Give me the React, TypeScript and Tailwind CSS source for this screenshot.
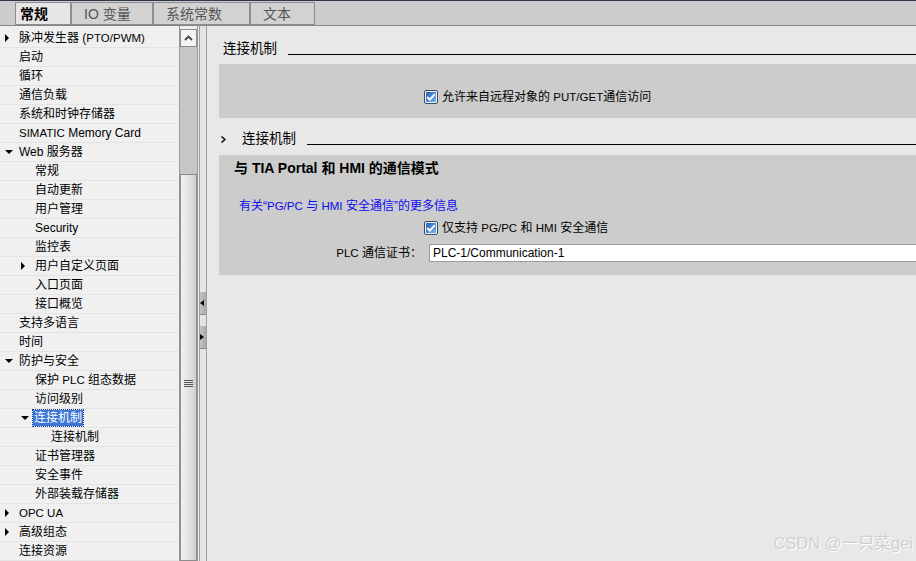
import React from 'react';

const FONT = "'Liberation Sans', 'Noto Sans CJK SC', sans-serif";

type Node = { label: string; level: number; arrow?: 'right' | 'down'; selected?: boolean };

const TREE: Node[] = [
    { label: '脉冲发生器 (PTO/PWM)', level: 0, arrow: 'right' },
    { label: '启动', level: 0 },
    { label: '循环', level: 0 },
    { label: '通信负载', level: 0 },
    { label: '系统和时钟存储器', level: 0 },
    { label: 'SIMATIC Memory Card', level: 0 },
    { label: 'Web 服务器', level: 0, arrow: 'down' },
    { label: '常规', level: 1 },
    { label: '自动更新', level: 1 },
    { label: '用户管理', level: 1 },
    { label: 'Security', level: 1 },
    { label: '监控表', level: 1 },
    { label: '用户自定义页面', level: 1, arrow: 'right' },
    { label: '入口页面', level: 1 },
    { label: '接口概览', level: 1 },
    { label: '支持多语言', level: 0 },
    { label: '时间', level: 0 },
    { label: '防护与安全', level: 0, arrow: 'down' },
    { label: '保护 PLC 组态数据', level: 1 },
    { label: '访问级别', level: 1 },
    { label: '连接机制', level: 1, arrow: 'down', selected: true },
    { label: '连接机制', level: 2 },
    { label: '证书管理器', level: 1 },
    { label: '安全事件', level: 1 },
    { label: '外部装载存储器', level: 1 },
    { label: 'OPC UA', level: 0, arrow: 'right' },
    { label: '高级组态', level: 0, arrow: 'right' },
    { label: '连接资源', level: 0 },
];

const INDENT = ['pl-[19px]', 'pl-[35px]', 'pl-[51px]'];
const ARROW_POS = ['left-[5px]', 'left-[21px]', 'left-[37px]'];

// Latin capitals in the reference use a narrower face than the CJK text
function Mixed({ text }: { text: string }) {
    const parts = text.split(/([A-Z][A-Z/()\-]*[A-Z)](?: [A-Z]+\b)?)/);
    return (
        <>
            {parts.map((p, i) =>
                i % 2 === 1 ? (
                    <span key={i} className="text-[11.5px]">{p}</span>
                ) : (
                    <React.Fragment key={i}>{p}</React.Fragment>
                ),
            )}
        </>
    );
}

function Arrow({ dir }: { dir: 'right' | 'down' }) {
    if (dir === 'right') {
        return (
            <svg width="4" height="8" viewBox="0 0 4 8">
                <path d="M0 0 L4 4 L0 8 Z" fill="#000" />
            </svg>
        );
    }
    return (
        <svg width="8" height="4" viewBox="0 0 8 4">
            <path d="M0 0 L8 0 L4 4 Z" fill="#000" />
        </svg>
    );
}

function TreeRow({ node }: { node: Node }) {
    return (
        <div className={`relative h-[19px] flex items-center border-b border-[#e4e4e4] text-[12px] text-black ${INDENT[node.level]}`}>
            {node.arrow && (
                <span className={`absolute top-0 bottom-0 flex items-center ${ARROW_POS[node.level]}`}>
                    <Arrow dir={node.arrow} />
                </span>
            )}
            {node.selected ? (
                <span className="bg-[#3a76d6] text-white px-[1px] -ml-[2px] leading-[16px] outline outline-1 outline-dotted outline-[#1b3f80]">
                    {node.label}
                </span>
            ) : (
                <span className="whitespace-nowrap">
                    <Mixed text={node.label} />
                </span>
            )}
        </div>
    );
}

function CheckBox() {
    return (
        <svg width="14" height="14" viewBox="0 0 14 14" className="shrink-0">
            <defs>
                <linearGradient id="cbFill" x1="0" y1="0" x2="1" y2="1">
                    <stop offset="0" stopColor="#1f5fb5" />
                    <stop offset="1" stopColor="#7db6ee" />
                </linearGradient>
            </defs>
            <rect x="0.5" y="0.5" width="13" height="13" rx="1.5" fill="#eef3f8" stroke="#3b4c66" />
            <rect x="2" y="2" width="10" height="10" rx="0.5" fill="url(#cbFill)" />
            <path d="M3.3 7 L5.8 9.6 L10.8 4.2" stroke="#fff" strokeWidth="1.9" fill="none" />
        </svg>
    );
}

function SectionHead({ title, chevron }: { title: string; chevron?: boolean }) {
    return (
        <div className="h-[20px] flex items-center">
            {chevron && (
                <svg width="5" height="7" viewBox="0 0 5 7" className="ml-[2px] mr-[16px]">
                    <path d="M0.5 0.5 L4 3.5 L0.5 6.5" stroke="#000" strokeWidth="1.4" fill="none" />
                </svg>
            )}
            <span className={`text-[13.5px] text-black whitespace-nowrap ${chevron ? '' : 'ml-[4px]'}`}>{title}</span>
            <div className="flex-1 self-end mb-[4px] ml-[11px] border-b border-black" />
        </div>
    );
}

function Tab({ label, active, w, pl }: { label: string; active?: boolean; w: string; pl: string }) {
    return (
        <div
            className={`${w} ${pl} h-[23px] pt-[1px] flex items-center border border-[#8e8e8e] text-[14px] whitespace-nowrap ${
                active ? 'bg-[#e6e6e6] text-black font-bold' : 'bg-[#d2d2d2] text-[#555]'
            }`}
        >
            {label}
        </div>
    );
}

export default function App() {
    return (
        <div className="relative w-[916px] h-[561px] overflow-hidden flex flex-col bg-[#e8e8e8]" style={{ fontFamily: FONT }}>
            <div className="h-[1px] bg-[#2b3646]" />
            <div className="h-[25px] bg-[#cccccc] border-b border-[#858585] flex items-end pl-[15px]">
                <Tab label="常规" active w="w-[56px]" pl="pl-[4px]" />
                <Tab label="IO 变量" w="w-[82px]" pl="pl-[12px]" />
                <Tab label="系统常数" w="w-[97px]" pl="pl-[12px]" />
                <Tab label="文本" w="w-[65px]" pl="pl-[12px]" />
            </div>

            <div className="flex-1 flex min-h-0">
                <div className="w-[179px] shrink-0 bg-[#f0f0f0] pt-[3px] overflow-hidden">
                    {TREE.map((n, i) => (
                        <TreeRow key={i} node={n} />
                    ))}
                </div>

                <div className="w-[19px] shrink-0 bg-[#f0f0f0] border-x border-[#9a9a9a] pt-[3px] flex flex-col">
                    <div className="h-[18px] bg-[#f4f4f4] border border-[#8c8c8c] flex items-center justify-center">
                        <svg width="9" height="6" viewBox="0 0 9 6">
                            <path d="M1 5 L4.5 1.5 L8 5" stroke="#444" strokeWidth="1.8" fill="none" />
                        </svg>
                    </div>
                    <div className="h-[127px] bg-[#c6c6c6]" />
                    <div className="flex-1 border border-[#8c8c8c] bg-gradient-to-r from-[#f2f2f2] via-[#e2e2e2] to-[#cfcfcf] flex justify-center pt-[205px]">
                        <div className="flex flex-col gap-[1px]">
                            <div className="w-[9px] h-[1px] bg-[#555]" />
                            <div className="w-[9px] h-[1px] bg-[#555]" />
                            <div className="w-[9px] h-[1px] bg-[#555]" />
                            <div className="w-[9px] h-[1px] bg-[#555]" />
                        </div>
                    </div>
                </div>

                <div className="w-[8px] shrink-0 bg-[#e4e4e4] ml-[1px] border-x border-[#a0a0a0] flex flex-col pt-[266px]">
                    <div className="h-[23px] bg-gradient-to-r from-[#c4c4c4] to-[#a8a8a8] border-b border-[#8a8a8a] flex items-center">
                        <svg width="4" height="6" viewBox="0 0 4 6">
                            <path d="M4 0 L0 3 L4 6 Z" fill="#000" />
                        </svg>
                    </div>
                    <div className="h-[11px]" />
                    <div className="h-[23px] bg-gradient-to-r from-[#c4c4c4] to-[#a8a8a8] border-b border-[#8a8a8a] flex items-center">
                        <svg width="4" height="6" viewBox="0 0 4 6">
                            <path d="M0 0 L4 3 L0 6 Z" fill="#000" />
                        </svg>
                    </div>
                </div>

                <div className="flex-1 min-w-0 bg-[#e8e8e8] pl-[12px] pt-[13px] text-black">
                    <SectionHead title="连接机制" />
                    <div className="mt-[5px] h-[54px] bg-[#cccccc] pl-[205px] pt-[26px]">
                        <div className="h-[14px] flex items-center gap-[4px] text-[12px] whitespace-nowrap">
                            <CheckBox />
                            <span>
                                <Mixed text="允许来自远程对象的 PUT/GET通信访问" />
                            </span>
                        </div>
                    </div>

                    <div className="mt-[11px]">
                        <SectionHead title="连接机制" chevron />
                    </div>
                    <div className="mt-[6px] h-[120px] bg-[#cccccc] pt-[6px]">
                        <div className="pl-[15px] h-[14px] flex items-center text-[14px] font-bold whitespace-nowrap">
                            与 TIA Portal 和 HMI 的通信模式
                        </div>
                        <div className="pl-[20px] mt-[24px] h-[14px] flex items-center text-[12px] text-[#0b0bef] whitespace-nowrap">
                            <span>
                                有关“<Mixed text="PG/PC" /> 与 <Mixed text="HMI" /> 安全通信”的更多信息
                            </span>
                        </div>
                        <div className="pl-[205px] mt-[8px] h-[14px] flex items-center gap-[4px] text-[12px] whitespace-nowrap">
                            <CheckBox />
                            <span>
                                仅支持 <Mixed text="PG/PC" /> 和 <Mixed text="HMI" /> 安全通信
                            </span>
                        </div>
                        <div className="mt-[9px] flex items-center">
                            <div className="w-[203px] text-right text-[12px] whitespace-nowrap">
                                <Mixed text="PLC" /> 通信证书：
                            </div>
                            <div className="ml-[7px] flex-1 h-[18px] bg-white border border-[#9c9c9c] border-r-0 flex items-center pl-[3px] text-[12px]">
                                PLC-1/Communication-1
                            </div>
                        </div>
                    </div>
                </div>
            </div>

            <div className="absolute right-[3px] bottom-[5px] text-[16.5px] text-[#d0d0d0] [text-shadow:1px_1px_0_#ffffff]">
                CSDN @一只菜gei
            </div>
        </div>
    );
}
